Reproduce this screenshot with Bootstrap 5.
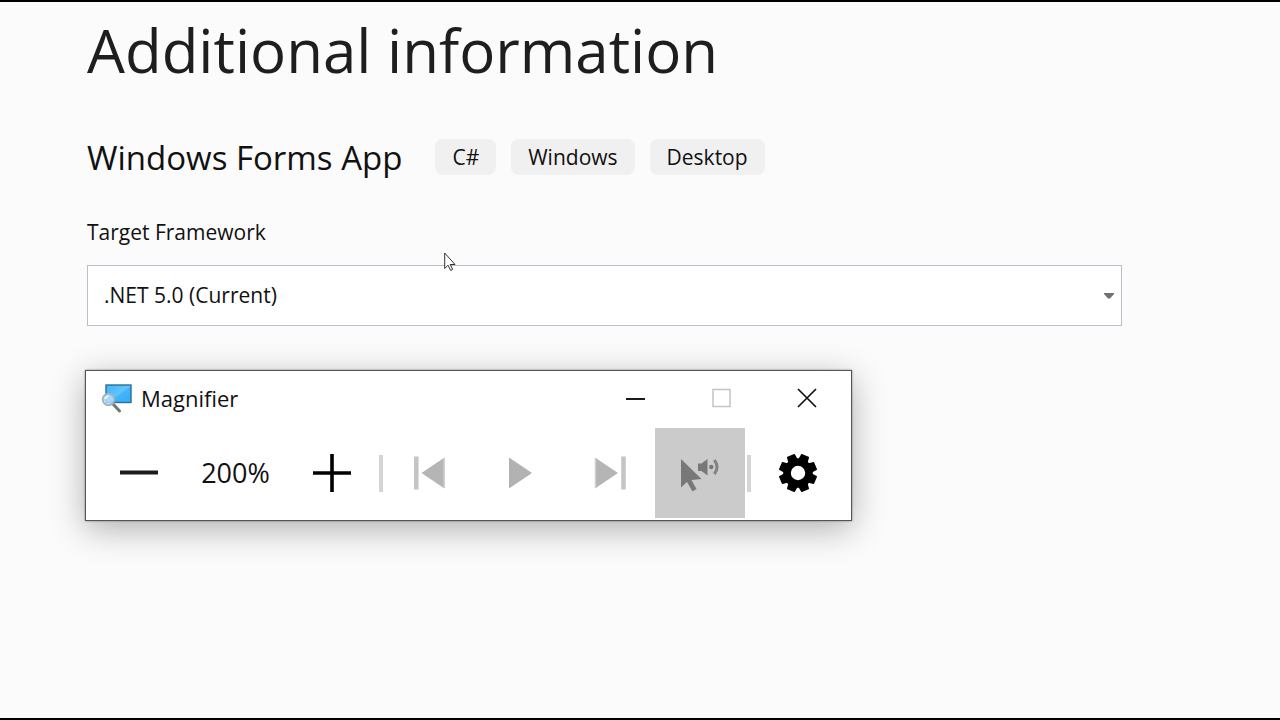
<!DOCTYPE html>
<html lang="en">
<head>
<meta charset="utf-8">
<meta name="viewport" content="width=device-width, initial-scale=1">
<title>Additional information</title>
<link href="https://cdn.jsdelivr.net/npm/bootstrap@5.3.0/dist/css/bootstrap.min.css" rel="stylesheet">
<style>
  body { font-family: "Open Sans", "Noto Sans", sans-serif; background: #fbfbfb; color: #111; }
  .page-frame { border-top: 2px solid #000; border-bottom: 2px solid #000; padding: 4px 158px 0 87px; }
  h1 { font-size: 60px; line-height: 88px; color: #1e1e1e; }
  h2 { font-size: 33px; line-height: 48px; }
  .head-row { margin-top: 40px; gap: 33px; }
  .tag-list { gap: 15px; margin-bottom: 2px; }
  .tag-item { background: #f0f0f0; border-radius: 8px; font-size: 21px; line-height: 36px; padding: 0 17px; }
  .field-label { font-size: 21px; line-height: 30px; margin: 35px 0 18px; }
  .framework-select { height: 61px; border: 1px solid #bcbecd; font-size: 21px; padding: 0 32px 0 16px; color: #111;
    background: #fff url("data:image/svg+xml,%3Csvg xmlns='http://www.w3.org/2000/svg' viewBox='0 0 10 6'%3E%3Cpath fill='%23717171' d='M0 0h10v1L6 5.500H4L0 1z'/%3E%3C/svg%3E") no-repeat right 7px center / 10px 6px; }
  .pointer { position: absolute; left: 444px; top: 250px; }
  .tool-window { max-width: 767px; margin: 44px 0 0 -2px; border: 1px solid #555; background: #fff; box-shadow: 0 8px 32px rgba(0,0,0,.3), 0 0 2px rgba(0,0,0,.4); }
  .title-bar { height: 57px; padding: 0 1px 3px 15px; }
  .title-text { font-size: 22px; line-height: 30px; margin-left: 9px; }
  .caption-btn { width: 86px; height: 54px; }
  .tool-row { padding: 0 8px 2px; }
  .tool-btn { width: 90px; height: 90px; }
  .plain-btn { border: 0; background: none; padding: 0; display: flex; align-items: center; justify-content: center; }
  .tool-btn.pressed { background: #cbcbcb; }
  .zoom-level { width: 103px; font-size: 27px; line-height: 36px; }
  .tool-sep { width: 4px; height: 37px; margin: 0 2px; background: #d5d5d5; }
</style>
</head>
<body>
<main class="page-frame min-vh-100 position-relative">
  <h1 class="fw-normal mb-0">Additional information</h1>
  <div class="head-row d-flex align-items-center">
    <h2 class="fw-normal mb-0">Windows Forms App</h2>
    <ul class="tag-list list-unstyled d-flex">
      <li class="tag-item">C#</li>
      <li class="tag-item">Windows</li>
      <li class="tag-item">Desktop</li>
    </ul>
  </div>
  <label class="field-label d-block" for="framework">Target Framework</label>
  <select id="framework" class="framework-select form-select rounded-0">
    <option selected>.NET 5.0 (Current)</option>
  </select>

  <section class="tool-window" aria-label="Magnifier">
    <header class="title-bar d-flex align-items-center">
      <svg width="31" height="30" viewBox="0 0 31 30" aria-hidden="true">
        <defs><linearGradient id="screen" x1="0" y1="0" x2="1" y2="1"><stop offset="0" stop-color="#3cb4fa"/><stop offset=".5" stop-color="#62c4fd"/><stop offset=".55" stop-color="#45b5fb"/><stop offset="1" stop-color="#35aaf5"/></linearGradient></defs>
        <rect x="5" y="2" width="25" height="17.500" fill="url(#screen)" stroke="#2a7096" stroke-width="1.400"/>
        <path d="M11.500 20.500l7 7.500" stroke="#70777c" stroke-width="3" stroke-linecap="round"/>
        <circle cx="7.500" cy="16.500" r="5.800" fill="#b5dcf4" fill-opacity=".85" stroke="#9fb2bd" stroke-width="1.800"/>
        <path d="M4.500 16a3.500 3.500 0 0 1 3-3" fill="none" stroke="#fff" stroke-width="1.500"/>
      </svg>
      <span class="title-text me-auto">Magnifier</span>
      <button class="caption-btn plain-btn" type="button" aria-label="Minimize">
        <svg width="19" height="20" viewBox="0 0 19 20"><path d="M0 11h19" stroke="#000" stroke-width="1.800"/></svg>
      </button>
      <button class="caption-btn plain-btn" type="button" aria-label="Maximize" disabled>
        <svg width="19" height="20" viewBox="0 0 19 20"><rect x="1" y="1.500" width="17" height="17" fill="none" stroke="#c4c4c4" stroke-width="1.500"/></svg>
      </button>
      <button class="caption-btn plain-btn" type="button" aria-label="Close">
        <svg width="20" height="20" viewBox="0 0 20 20"><path d="M1 1l18 18M19 1L1 19" stroke="#111" stroke-width="1.700"/></svg>
      </button>
    </header>
    <div class="tool-row d-flex align-items-center">
      <button class="tool-btn plain-btn" type="button" aria-label="Zoom out">
        <svg width="38" height="38" viewBox="0 0 38 38"><path d="M0 18.500h38" stroke="#1c1c1c" stroke-width="4"/></svg>
      </button>
      <span class="zoom-level text-center">200%</span>
      <button class="tool-btn plain-btn" type="button" aria-label="Zoom in">
        <svg width="38" height="38" viewBox="0 0 38 38"><path d="M0 19h38M19 0v38" stroke="#000" stroke-width="3.600"/></svg>
      </button>
      <span class="tool-sep"></span>
      <button class="tool-btn plain-btn" type="button" aria-label="Previous" disabled>
        <svg width="32" height="34" viewBox="0 0 32 34"><path d="M2.300 0.500v33" stroke="#c4c4c4" stroke-width="4.500"/><path d="M30.500 1.500v31L7.500 17z" fill="#b5b5b5"/><path d="M30 2v30" stroke="#cdcdcd" stroke-width="1.500"/></svg>
      </button>
      <button class="tool-btn plain-btn" type="button" aria-label="Play" disabled>
        <svg width="24" height="34" viewBox="0 0 24 34"><path d="M1 1.500v31L24 17z" fill="#b2b2b2"/></svg>
      </button>
      <button class="tool-btn plain-btn" type="button" aria-label="Next" disabled>
        <svg width="32" height="34" viewBox="0 0 32 34"><path d="M29.500 0.500v33" stroke="#c4c4c4" stroke-width="4.500"/><path d="M1 1.500v31L24 17z" fill="#b5b5b5"/><path d="M1.500 2v30" stroke="#cdcdcd" stroke-width="1.500"/></svg>
      </button>
      <button class="tool-btn plain-btn pressed" type="button" aria-label="Read from mouse pointer">
        <svg width="38" height="38" viewBox="0 0 38 38" fill="#787878">
          <path d="M0 5v28.500l6-5.500 5.500 9.500 4-2.500L10.500 26 20.500 25z"/>
          <path d="M17 9.500h3.500L26.500 5v16.500L20.500 17H17z"/>
          <circle cx="30.300" cy="13" r="2.200"/>
          <path d="M33.300 6q5.500 7 0 14" fill="none" stroke="#828282" stroke-width="3"/>
        </svg>
      </button>
      <span class="tool-sep"></span>
      <button class="tool-btn plain-btn" type="button" aria-label="Settings">
        <svg width="38" height="38" viewBox="-19 -19 38 38">
          <defs><path id="tooth" d="M-5.200-11L-4.300-18.300q0-.7.700-.7h7.200q.7 0 .7.700L5.200-11z"/></defs>
          <circle r="11" fill="none" stroke="#000" stroke-width="7.600"/>
          <use href="#tooth" transform="rotate(22.500)"/>
          <use href="#tooth" transform="rotate(67.500)"/>
          <use href="#tooth" transform="rotate(112.500)"/>
          <use href="#tooth" transform="rotate(157.500)"/>
          <use href="#tooth" transform="rotate(202.500)"/>
          <use href="#tooth" transform="rotate(247.500)"/>
          <use href="#tooth" transform="rotate(292.500)"/>
          <use href="#tooth" transform="rotate(337.500)"/>
        </svg>
      </button>
    </div>
  </section>

  <svg class="pointer" width="12" height="20" viewBox="0 0 12 20" aria-hidden="true">
    <path d="M.7 1v15.500l3.300-3.300 2.700 5.300 2-1-2.500-5h4.800z" fill="#fff" stroke="#333" stroke-width="1"/>
  </svg>
</main>
<script src="https://cdn.jsdelivr.net/npm/bootstrap@5.3.0/dist/js/bootstrap.bundle.min.js"></script>
</body>
</html>
